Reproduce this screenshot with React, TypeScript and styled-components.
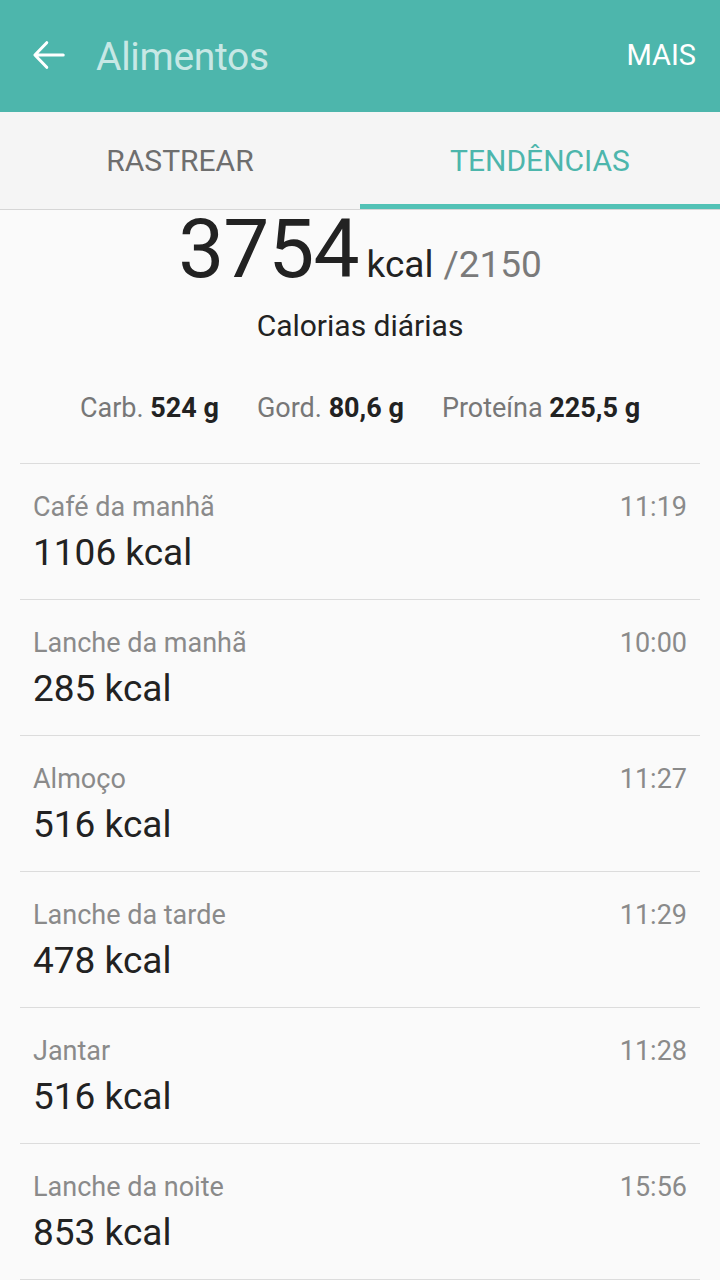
import React from 'react';
import styled, { createGlobalStyle } from 'styled-components';

const GlobalStyle = createGlobalStyle`
  html, body {
    margin: 0;
    padding: 0;
    background: #fafafa;
    font-family: Roboto, "Noto Sans", sans-serif;
  }
`;

const meals = [
  { name: 'Café da manhã', time: '11:19', kcal: 1106 },
  { name: 'Lanche da manhã', time: '10:00', kcal: 285 },
  { name: 'Almoço', time: '11:27', kcal: 516 },
  { name: 'Lanche da tarde', time: '11:29', kcal: 478 },
  { name: 'Jantar', time: '11:28', kcal: 516 },
  { name: 'Lanche da noite', time: '15:56', kcal: 853 },
];

const App: React.FC = () => {
  return (
    <Page>
      <GlobalStyle />
      <AppBar>
        <BackButton aria-label="Voltar">
          <svg width="36" height="36" viewBox="0 0 24 24" fill="none">
            <path
              d="M21.5 12H3M10.5 3.8L2.6 12l7.9 8.2"
              stroke="#fff"
              strokeWidth="2"
              strokeLinecap="round"
              strokeLinejoin="round"
            />
          </svg>
        </BackButton>
        <Title>Alimentos</Title>
        <MoreButton>MAIS</MoreButton>
      </AppBar>

      <Tabs>
        <Tab>RASTREAR</Tab>
        <Tab active>TENDÊNCIAS</Tab>
      </Tabs>

      <Summary>
        <TotalLine>
          <Total>3754</Total>
          <Unit>kcal</Unit>
          <Goal>/2150</Goal>
        </TotalLine>
        <Caption>Calorias diárias</Caption>
        <Macros>
          <Macro>
            Carb. <b>524 g</b>
          </Macro>
          <Macro>
            Gord. <b>80,6 g</b>
          </Macro>
          <Macro>
            Proteína <b>225,5 g</b>
          </Macro>
        </Macros>
      </Summary>

      <MealList>
        {meals.map((m) => (
          <MealRow key={m.name}>
            <MealHead>
              <MealName>{m.name}</MealName>
              <MealTime>{m.time}</MealTime>
            </MealHead>
            <MealKcal>{m.kcal} kcal</MealKcal>
          </MealRow>
        ))}
      </MealList>
    </Page>
  );
};

const Page = styled.div`
  width: 720px;
  min-height: 1280px;
  background: #fafafa;
  overflow: hidden;
`;

const AppBar = styled.header`
  height: 112px;
  background: #4db6ac;
  display: flex;
  align-items: center;
  padding: 0 24px 0 31px;
  box-sizing: border-box;
`;

const BackButton = styled.div`
  width: 36px;
  height: 36px;
  display: flex;
  margin-top: -2px;
`;

const Title = styled.h1`
  margin: 2px 0 0 29px;
  flex: 1;
  font-size: 39px;
  font-weight: 400;
  color: rgba(255, 255, 255, 0.7);
  letter-spacing: -0.3px;
`;

const MoreButton = styled.div`
  font-size: 29px;
  color: #fff;
  margin-top: -2px;
`;

const Tabs = styled.nav`
  height: 97px;
  display: flex;
  background: #f5f5f5;
  border-bottom: 1px solid #d6d6d6;
`;

const Tab = styled.div<{ active?: boolean }>`
  flex: 1;
  display: flex;
  align-items: center;
  justify-content: center;
  font-size: 30px;
  color: ${({ active }) => (active ? '#4db6ac' : '#6e6e6e')};
  border-bottom: 5px solid ${({ active }) => (active ? '#53c2b6' : 'transparent')};
  padding-top: 5px;
`;

const Summary = styled.section`
  display: flex;
  flex-direction: column;
  align-items: center;
  margin: 0 20px;
  border-bottom: 1px solid #dcdcdc;
  height: 254px;
  box-sizing: border-box;
`;

const TotalLine = styled.div`
  display: flex;
  align-items: baseline;
  margin-top: -9px;
  height: 84px;
`;

const Total = styled.span`
  font-size: 82px;
  color: #222;
  letter-spacing: -1px;
`;

const Unit = styled.span`
  font-size: 37px;
  color: #222;
  margin-left: 8px;
`;

const Goal = styled.span`
  font-size: 37px;
  color: #7a7a7a;
  margin-left: 10px;
`;

const Caption = styled.div`
  font-size: 30px;
  color: #222;
  margin-top: 23px;
`;

const Macros = styled.div`
  display: flex;
  gap: 38px;
  margin-top: 49px;
  font-size: 27px;
  color: #777;
  b {
    color: #222;
    font-weight: 700;
  }
`;

const Macro = styled.span``;

const MealList = styled.ul`
  list-style: none;
  margin: 0 20px;
  padding: 0;
`;

const MealRow = styled.li`
  height: 136px;
  box-sizing: border-box;
  border-bottom: 1px solid #dcdcdc;
  padding: 27px 13px 0;
`;

const MealHead = styled.div`
  display: flex;
  justify-content: space-between;
  align-items: baseline;
  font-size: 27px;
  color: #8a8a8a;
`;

const MealName = styled.span``;

const MealTime = styled.span``;

const MealKcal = styled.div`
  font-size: 37px;
  color: #222;
  margin-top: 8px;
`;

export default App;
